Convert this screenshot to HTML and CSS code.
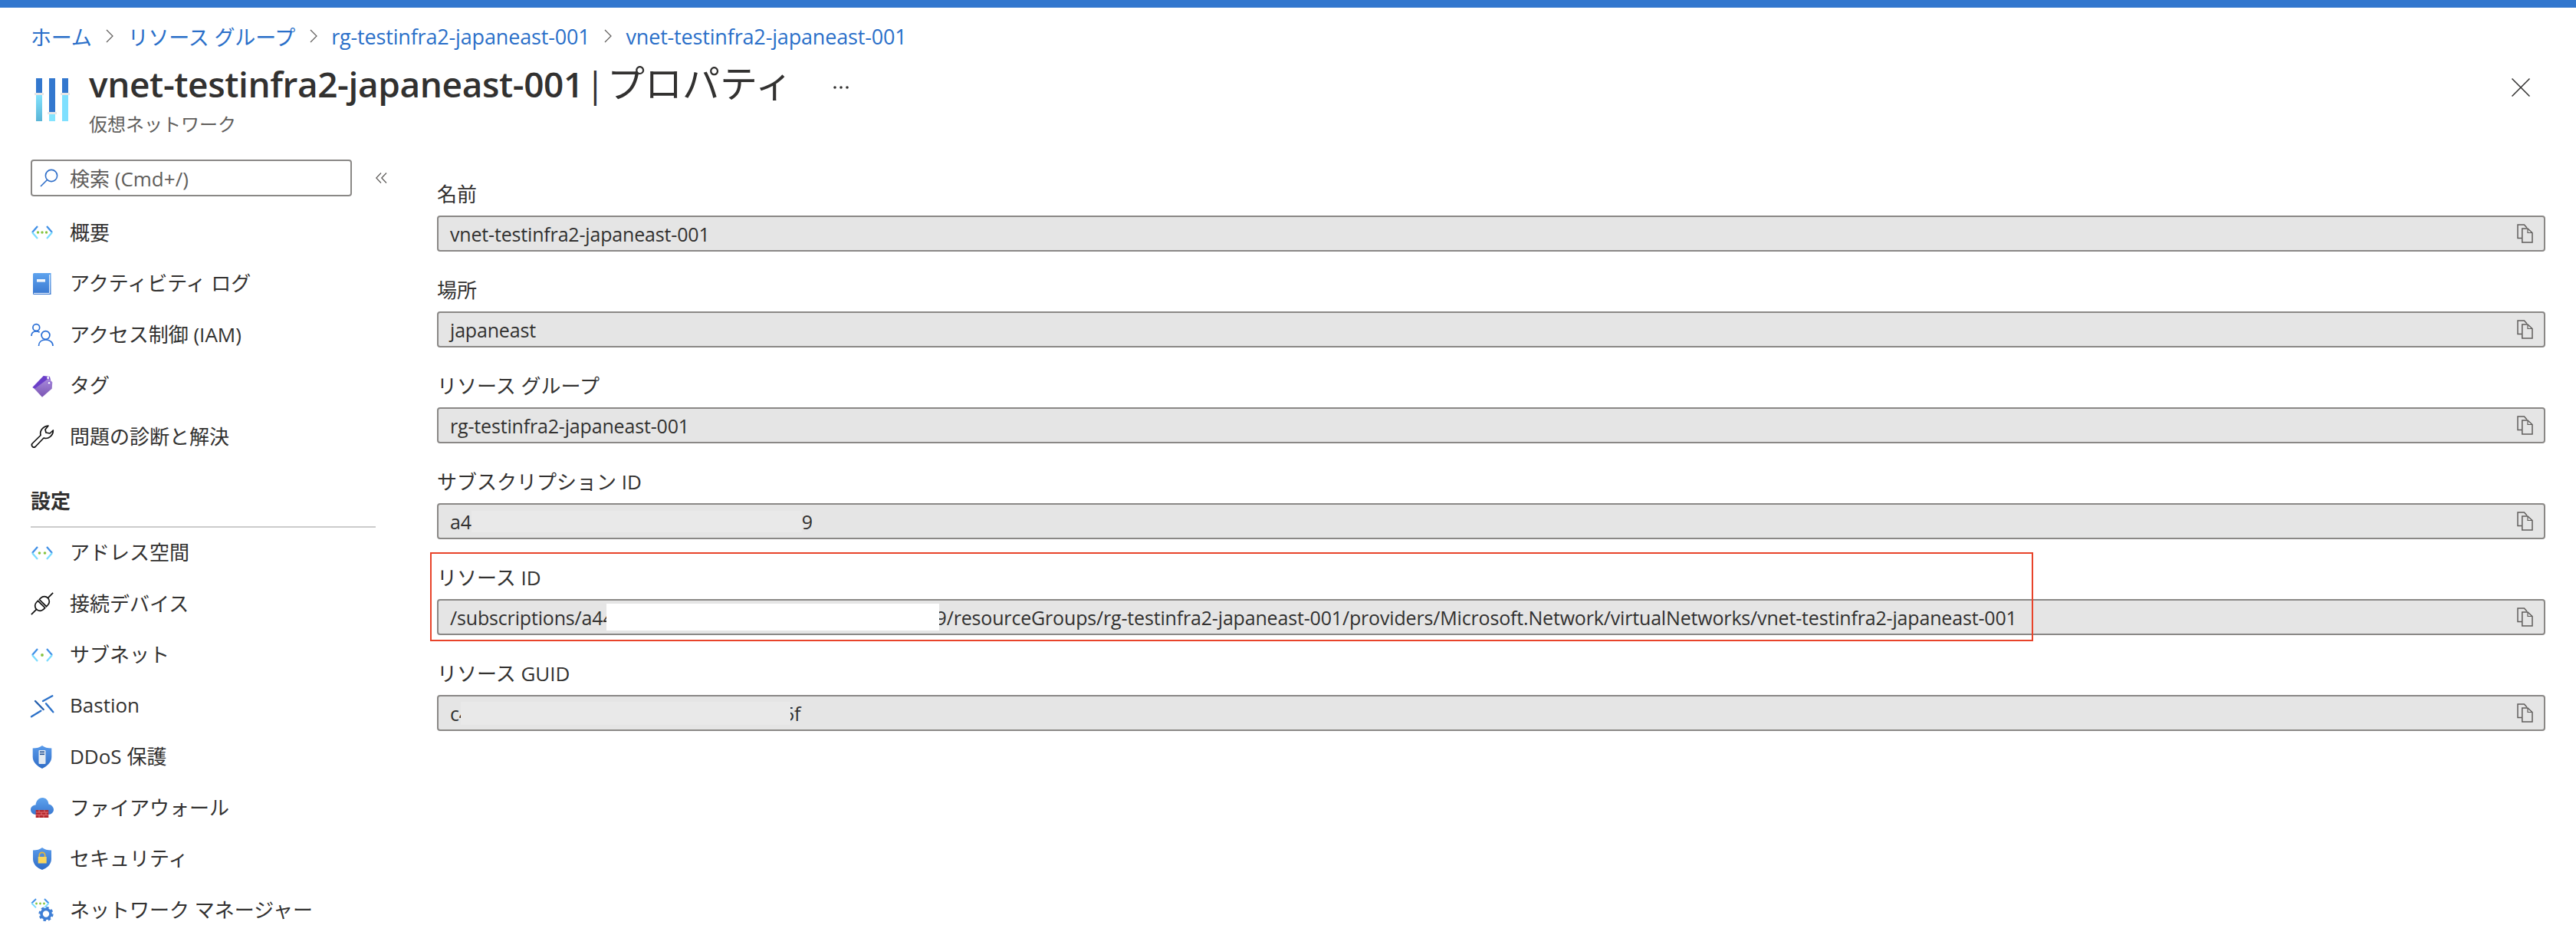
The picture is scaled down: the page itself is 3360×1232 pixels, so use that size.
FILE: index.html
```html
<!DOCTYPE html>
<html lang="ja">
<head>
<meta charset="utf-8">
<title>vnet-testinfra2-japaneast-001 | プロパティ</title>
<link rel="stylesheet" href="styles.css">
</head>
<body>
<svg class="defs" width="0" height="0" aria-hidden="true">
  <defs>
    <linearGradient id="gBlue" x1="0" y1="0" x2="0" y2="1"><stop offset="0" stop-color="#5ea3ee"/><stop offset="1" stop-color="#3a78d0"/></linearGradient>
    <linearGradient id="gShield" x1="0" y1="0" x2="0" y2="1"><stop offset="0" stop-color="#5a9bea"/><stop offset="1" stop-color="#2f6cc6"/></linearGradient>
    <linearGradient id="gPurple" x1="0" y1="0" x2="0" y2="1"><stop offset="0" stop-color="#a98bdc"/><stop offset="1" stop-color="#7a55b4"/></linearGradient>
    <linearGradient id="gLight" x1="0" y1="0" x2="0" y2="1"><stop offset="0" stop-color="#84e4ff"/><stop offset="1" stop-color="#59b4d6"/></linearGradient>
    <symbol id="chev" viewBox="0 0 30 30">
      <path d="M9 7 L2 15" stroke="#3f8fe6" stroke-width="2.2" fill="none"/>
      <path d="M2 15 L9 23" stroke="#7adcff" stroke-width="2.2" fill="none"/>
      <path d="M21 7 L28 15" stroke="#3f8fe6" stroke-width="2.2" fill="none"/>
      <path d="M28 15 L21 23" stroke="#7adcff" stroke-width="2.2" fill="none"/>
    </symbol>
    <symbol id="copy" viewBox="0 0 21 25">
      <path d="M6 18.5 H1 V1 H9.5 L13 5" fill="none" stroke="#605e5c" stroke-width="1.5"/>
      <path d="M6.8 6 H14 L20 11.5 V24 H6.8 Z" fill="none" stroke="#605e5c" stroke-width="1.5"/>
      <path d="M14 6 V11.5 H20" fill="none" stroke="#605e5c" stroke-width="1.2"/>
    </symbol>
  </defs>
</svg>

<div class="topbar"></div>

<nav class="crumbs">
  <a class="crumb">ホーム</a>
  <svg class="crumb-sep" viewBox="0 0 10 20"><path d="M1 2 L9 10 L1 18" fill="none" stroke="#605e5c" stroke-width="1.2"/></svg>
  <a class="crumb">リソース グループ</a>
  <svg class="crumb-sep" viewBox="0 0 10 20"><path d="M1 2 L9 10 L1 18" fill="none" stroke="#605e5c" stroke-width="1.2"/></svg>
  <a class="crumb">rg-testinfra2-japaneast-001</a>
  <svg class="crumb-sep" viewBox="0 0 10 20"><path d="M1 2 L9 10 L1 18" fill="none" stroke="#605e5c" stroke-width="1.2"/></svg>
  <a class="crumb">vnet-testinfra2-japaneast-001</a>
</nav>

<header class="head">
  <svg class="head-icon" viewBox="0 0 46 56">
    <rect x="2" y="0" width="8" height="20" fill="#3277ce"/>
    <rect x="2" y="20" width="8" height="36" fill="url(#gLight)"/>
    <rect x="0" y="19" width="12" height="3" fill="#e6e6e6"/>
    <rect x="19" y="0" width="8" height="44" fill="#3277ce"/>
    <rect x="19" y="44" width="8" height="12" fill="#84e4ff"/>
    <rect x="17" y="44" width="12" height="3" fill="#e6e6e6"/>
    <rect x="36" y="0" width="8" height="20" fill="#3277ce"/>
    <rect x="36" y="20" width="8" height="36" fill="#7fe0ff"/>
    <rect x="34" y="19" width="12" height="3" fill="#e6e6e6"/>
  </svg>
  <div class="head-text">
    <h1 class="title"><b class="title-name">vnet-testinfra2-japaneast-001</b> | <span class="title-page">プロパティ</span></h1>
    <div class="subtitle">仮想ネットワーク</div>
  </div>
  <svg class="more" viewBox="0 0 20 4"><circle cx="2" cy="2" r="1.8"/><circle cx="10" cy="2" r="1.8"/><circle cx="18" cy="2" r="1.8"/></svg>
  <svg class="close" viewBox="0 0 24 24"><path d="M0.5 0.5 L23.5 23.5 M23.5 0.5 L0.5 23.5" fill="none" stroke="#323130" stroke-width="1.5"/></svg>
</header>

<div class="body">
  <aside class="side">
    <div class="search-row">
      <div class="search">
        <svg class="search-icon" viewBox="0 0 25 24"><circle cx="15" cy="9" r="7.6" fill="none" stroke="#2f6fc9" stroke-width="1.6"/><path d="M9.5 14.5 L1 23" fill="none" stroke="#2f6fc9" stroke-width="1.6"/></svg>
        <span>検索 (Cmd+/)</span>
      </div>
      <svg class="collapse" viewBox="0 0 15 14"><path d="M7 0.5 L0.8 7 L7 13.5 M14 0.5 L7.8 7 L14 13.5" fill="none" stroke="#605e5c" stroke-width="1.3"/></svg>
    </div>

    <ul class="menu">
      <li class="item">
        <svg class="ico" viewBox="0 0 30 30"><use href="#chev"/><circle cx="9.5" cy="15" r="1.7" fill="#86c440"/><circle cx="15" cy="15" r="1.7" fill="#86c440"/><circle cx="20.5" cy="15" r="1.7" fill="#86c440"/></svg>
        <span>概要</span>
      </li>
      <li class="item">
        <svg class="ico" viewBox="0 0 30 30"><path d="M3 2.5 Q3 1 4.5 1 H26.5 V29 H4 Q3 29 3 28 Z" fill="url(#gBlue)"/><path d="M24.7 3 V27.4 H4" fill="none" stroke="#fff" stroke-width="1"/><rect x="8" y="9" width="11" height="3.6" fill="#f2f6fb"/></svg>
        <span>アクティビティ ログ</span>
      </li>
      <li class="item">
        <svg class="ico" viewBox="0 0 30 30"><g fill="none" stroke="#2a6fd6" stroke-width="1.7"><circle cx="7.3" cy="6" r="4.4"/><circle cx="19.5" cy="16" r="5.4"/><path d="M1 17 C1 13 3.5 11 7.3 11 C9 11 10.5 11.5 11.6 12.3"/><path d="M10.5 30 C10.5 25 14 22 19.5 22 C25 22 29 25 29 30"/></g></svg>
        <span>アクセス制御 (IAM)</span>
      </li>
      <li class="item">
        <svg class="ico" viewBox="0 0 30 30"><path d="M2.3 17 L16.7 2 L25 3 L26 8 L6.7 20 Z" fill="#6b3fc9"/><path d="M5 19 L23.3 5.3 L28.3 10.3 L27.7 18.7 L15 29.7 Z" fill="url(#gPurple)"/><circle cx="22.7" cy="4.6" r="1.5" fill="#fff"/><circle cx="24" cy="11.3" r="1.8" fill="#fff" stroke="#6b3fc9" stroke-width="0.6"/></svg>
        <span>タグ</span>
      </li>
      <li class="item">
        <svg class="ico" viewBox="0 0 30 30"><path d="M1.8 24.5 L13 13.5 C11.5 8 15.5 2 23 1 L19 6 L20 10 L25 11 L29.3 7 C29.5 14 23 19 17 17 L6 28.5 C3.5 30.5 0.3 27.3 1.8 24.5 Z" fill="none" stroke="#111" stroke-width="1.7" stroke-linejoin="round"/></svg>
        <span>問題の診断と解決</span>
      </li>
    </ul>

    <div class="group">設定</div>

    <ul class="menu">
      <li class="item">
        <svg class="ico" viewBox="0 0 30 30"><use href="#chev"/><circle cx="11.5" cy="15" r="1.8" fill="#86c440"/><circle cx="18.5" cy="15" r="1.8" fill="#86c440"/></svg>
        <span>アドレス空間</span>
      </li>
      <li class="item">
        <svg class="ico" viewBox="0 0 30 30"><g transform="rotate(-45 15 15)" fill="none" stroke="#111" stroke-width="1.7"><path d="M13.7 8.5 H11 a6.5 6.5 0 0 0 0 13 H13.7 Z"/><path d="M16.3 8.5 H19 a6.5 6.5 0 0 1 0 13 H16.3 Z"/><path d="M-5 15 H4.5 M25.5 15 H35"/></g></svg>
        <span>接続デバイス</span>
      </li>
      <li class="item">
        <svg class="ico" viewBox="0 0 30 30"><use href="#chev"/><circle cx="15" cy="15" r="1.9" fill="#86c440"/></svg>
        <span>サブネット</span>
      </li>
      <li class="item">
        <svg class="ico" viewBox="0 0 30 30"><g fill="none" stroke="#2d72c9" stroke-width="2.4" stroke-linecap="round"><path d="M16 9 L28.3 2.3"/><path d="M1 29.3 L13.3 21.7"/><path d="M6 9 L16.7 20" stroke="#245fae"/><path d="M20 12.3 L29.3 23.3"/></g></svg>
        <span>Bastion</span>
      </li>
      <li class="item">
        <svg class="ico" viewBox="0 0 30 30"><path d="M15 0 C18 2.5 22 3.5 27.3 3.5 V15 C27.3 22 21 27 15 30 C9 27 2.7 22 2.7 15 V3.5 C8 3.5 12 2.5 15 0 Z" fill="url(#gShield)"/><rect x="10.5" y="6" width="9" height="18" rx="1" fill="#e4ebf2"/><rect x="12" y="7.5" width="6" height="1.6" fill="#1f4f91"/><rect x="12" y="10.5" width="6" height="1.6" fill="#1f4f91"/></svg>
        <span>DDoS 保護</span>
      </li>
      <li class="item">
        <svg class="ico" viewBox="0 0 30 30"><path d="M7 24 C2.5 24 0 21 0 17.5 C0 14 3 11.5 6.5 11.5 C7 6 10.5 2 15.5 2 C20 2 23 5.5 23.5 10.5 C27 11 30 14 30 17.5 C30 21 27 24 23 24 Z" fill="url(#gBlue)"/><rect x="6.7" y="18" width="16.6" height="10" fill="#b3282d"/><path d="M7 21 H23 M7 24.5 H23" stroke="#e8777a" stroke-width="0.9"/><path d="M11 18 V21 M18 18 V21 M14 21 V24.5 M20 21 V24.5 M11 24.5 V28 M17 24.5 V28" stroke="#e8777a" stroke-width="0.9"/></svg>
        <span>ファイアウォール</span>
      </li>
      <li class="item">
        <svg class="ico" viewBox="0 0 30 30"><path d="M15 0 C18 2.5 22 3.5 27 3.5 V15 C27 22 21 27 15 29 C9 27 3 22 3 15 V3.5 C8 3.5 12 2.5 15 0 Z" fill="url(#gShield)"/><path d="M11.3 12 V10 A3.7 3.7 0 0 1 18.7 10 V12" fill="none" stroke="#e6b73a" stroke-width="1.7"/><rect x="9.7" y="12" width="11" height="8.5" fill="#fbd65c"/></svg>
        <span>セキュリティ</span>
      </li>
      <li class="item">
        <svg class="ico" viewBox="0 0 30 30"><g fill="none" stroke-width="1.9"><path d="M7 1 L1.3 6.5" stroke="#3f8fe6"/><path d="M1.3 6.5 L7 12.3" stroke="#7adcff"/><path d="M18 1 L23.5 6.5" stroke="#3f8fe6"/><path d="M23.5 6.5 L18 12.3" stroke="#7adcff"/></g><circle cx="7.5" cy="7" r="1.4" fill="#86c440"/><circle cx="12.5" cy="7" r="1.4" fill="#86c440"/><circle cx="17.5" cy="7" r="1.4" fill="#86c440"/><circle cx="20" cy="20.5" r="6" fill="none" stroke="#3e7fd6" stroke-width="3.6"/><circle cx="20" cy="20.5" r="8.2" fill="none" stroke="#3e7fd6" stroke-width="2.8" stroke-dasharray="3.4 3.04"/></svg>
        <span>ネットワーク マネージャー</span>
      </li>
    </ul>
  </aside>

  <main class="main">
    <section class="prop">
      <div class="label">名前</div>
      <div class="field"><span class="val">vnet-testinfra2-japaneast-001</span><svg class="copy"><use href="#copy"/></svg></div>
    </section>
    <section class="prop">
      <div class="label">場所</div>
      <div class="field"><span class="val">japaneast</span><svg class="copy"><use href="#copy"/></svg></div>
    </section>
    <section class="prop">
      <div class="label">リソース グループ</div>
      <div class="field"><span class="val">rg-testinfra2-japaneast-001</span><svg class="copy"><use href="#copy"/></svg></div>
    </section>
    <section class="prop">
      <div class="label">サブスクリプション ID</div>
      <div class="field"><span class="val">a4<i class="mask mask-sub"></i>9</span><svg class="copy"><use href="#copy"/></svg></div>
    </section>
    <section class="prop">
      <div class="label">リソース ID</div>
      <div class="field"><span class="val">/subscriptions/a44<i class="mask mask-rid"></i>9/resourceGroups/rg-testinfra2-japaneast-001/providers/Microsoft.Network/virtualNetworks/vnet-testinfra2-japaneast-001</span><svg class="copy"><use href="#copy"/></svg></div>
      <div class="marker"></div>
    </section>
    <section class="prop">
      <div class="label">リソース GUID</div>
      <div class="field"><span class="val">c4<i class="mask mask-guid"></i>5f</span><svg class="copy"><use href="#copy"/></svg></div>
    </section>
  </main>
</div>
</body>
</html>
```
FILE: styles.css
```css
* { box-sizing: border-box; }
html, body { margin: 0; padding: 0; }
body {
  width: 3360px;
  height: 1232px;
  overflow: hidden;
  background: #fff;
  color: #323130;
  font-family: "Open Sans", "Noto Sans CJK JP", sans-serif;
}
.defs { position: absolute; }
.topbar { height: 10px; background: #3277ce; }

.crumbs {
  display: flex;
  align-items: center;
  height: 74px;
  padding-left: 40px;
  font-size: 27px;
  letter-spacing: -0.17px;
  color: #2a6fc9;
}
.crumb { white-space: nowrap; }
.crumb-sep { width: 10px; height: 20px; margin: 0 18.5px; }

.head {
  display: flex;
  align-items: flex-start;
  height: 124px;
  padding-left: 45px;
  padding-top: 18px;
}
.head-icon { width: 46px; height: 56px; flex: none; }
.head-text { margin-left: 25px; margin-top: -27px; }
.title { margin: 0; font-size: 46px; line-height: 66px; font-weight: 400; white-space: nowrap; word-spacing: -9px; }
.title-name { font-weight: 600; letter-spacing: -0.4px; }
.title-page { font-size: 49px; }
.subtitle { font-size: 24px; line-height: 34px; color: #605e5c; margin-top: 3px; }
.more { width: 20px; height: 4px; fill: #323130; margin-left: 53px; margin-top: 10px; flex: none; }
.close { width: 24px; height: 24px; margin-left: auto; margin-right: 60px; flex: none; }

.body { display: flex; }
.side { width: 570px; flex: none; padding-left: 40px; }
.search-row { display: flex; align-items: center; height: 48px; margin-bottom: 14px; }
.search {
  width: 419px;
  height: 48px;
  display: flex;
  align-items: center;
  border: 2px solid #8a8886;
  border-radius: 4px;
  padding-left: 10px;
  font-size: 26px;
  color: #605e5c;
}
.search-icon { width: 25px; height: 24px; margin-right: 14px; flex: none; }
.collapse { width: 15px; height: 14px; margin-left: 31px; flex: none; }

.menu { list-style: none; margin: 0; padding: 0; width: 450px; }
.item {
  display: flex;
  align-items: center;
  gap: 21px;
  height: 66.5px;
  font-size: 26px;
  white-space: nowrap;
}
.item span { padding-bottom: 3px; }
.ico { width: 30px; height: 30px; flex: none; overflow: visible; }
.group {
  width: 450px;
  height: 85px;
  padding-top: 32px;
  border-bottom: 2px solid #cccccc;
  font-size: 26px;
  line-height: 36px;
  font-weight: 700;
}

.main { flex: 1; padding: 27px 40px 0 0; }
.prop { position: relative; margin-bottom: 32px; }
.label { font-size: 26px; line-height: 36px; margin-bottom: 10px; white-space: nowrap; }
.field {
  display: flex;
  align-items: center;
  height: 47px;
  background: #e5e5e5;
  border: 2px solid #8a8886;
  border-radius: 4px;
  padding: 0 14px 0 15px;
  font-size: 25px;
  letter-spacing: -0.17px;
}
.val { flex: 1; white-space: nowrap; display: flex; align-items: center; }
.copy { width: 21px; height: 25px; flex: none; }
.mask { display: block; flex: none; height: 30px; background: #e9e9e9; position: relative; }
.mask-sub { width: 431px; height: 28px; }
.mask-rid { width: 434px; height: 35px; background: #fff; margin-left: -10px; margin-right: -4px; }
.mask-guid { width: 430px; margin-left: -12px; margin-right: -9px; }
.marker {
  position: absolute;
  left: -9px;
  top: -15px;
  width: 2091px;
  height: 116px;
  border: 2px solid #e8432a;
  pointer-events: none;
}
```
